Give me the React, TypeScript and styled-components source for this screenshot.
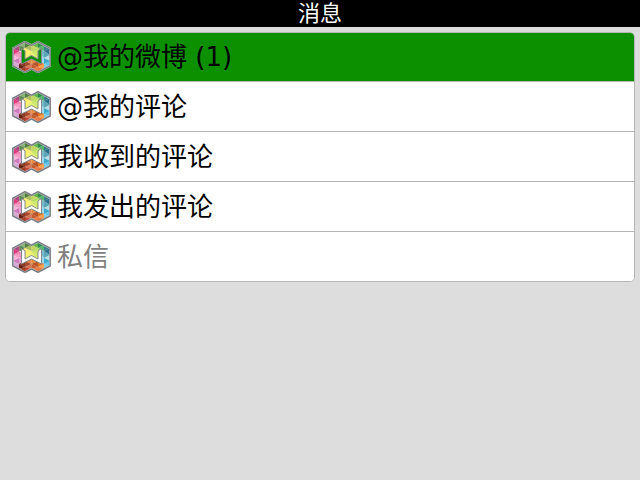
import React from "react";
import styled, { createGlobalStyle } from "styled-components";

const GlobalStyle = createGlobalStyle`
  * { box-sizing: border-box; }
  html, body, #root { height: 100%; }
  body {
    margin: 0;
    background: #dddddd;
    font-family: "DejaVu Sans", "Noto Sans CJK SC", sans-serif;
  }
`;

const Screen = styled.main`
  min-height: 100%;
  background: #dddddd;
`;

const TitleBar = styled.header`
  display: flex;
  align-items: center;
  justify-content: center;
  height: 27px;
  background: #000;
`;

const Title = styled.h1`
  margin: 0;
  color: #fff;
  font-size: 22px;
  line-height: 26px;
  font-weight: 400;
`;

const MessageList = styled.ul`
  margin: 5px;
  padding: 0;
  list-style: none;
  overflow: hidden;
  background: #fff;
  border: 1px solid #b5b5b5;
  border-radius: 5px;
`;

const Item = styled.li`
  & + & { border-top: 1px solid #b5b5b5; }
`;

const RowButton = styled.button<{ $selected?: boolean; $first?: boolean }>`
  display: flex;
  align-items: center;
  gap: 6px;
  width: 100%;
  height: ${(p) => (p.$first ? 48 : 49)}px;
  padding: 0 6px;
  border: 0;
  background: ${(p) => (p.$selected ? "#0c9000" : "#fff")};
  color: #000;
  font: inherit;
  font-size: 26px;
  line-height: 32px;
  text-align: left;
  cursor: pointer;

  &:disabled {
    color: #808080;
    cursor: default;
  }
`;

const Label = styled.span`
  white-space: pre;
`;

const LogoSvg = styled.svg`
  flex: none;
  display: block;
`;

const outline = "M.8 7.3 13 .8l6.5 3.4L26 .8l12.2 6.5v17.6L26 31.3l-6.5-3.4-6.5 3.4L.8 24.9Z";
const letter = "M9.5 7.5V23l10-5 10 5V7.5L26 9.8v8.2l-6.5-3.5L13 18V9.8Z";

const facets: [string, string][] = [
  ["1,7 7,10.5 1,14", "#e23b80"],
  ["1,7 7,4 7,10.5", "#a8497f"],
  ["7,4 10,9 7,10.5", "#c98aa8"],
  ["7,10.5 10,12.5 10,17 1,14", "#f07fae"],
  ["1,14 7,17 1,20", "#ffb6dc"],
  ["1,14 10,12 7,17", "#f59cc8"],
  ["7,17 10,15 10,22 7,23", "#e6a0d2"],
  ["1,20 7,17 7,23", "#cf79bd"],
  ["1,20 7,23 1,25", "#dcaad8"],
  ["7,23 10,21 10,26 7,28 1,25", "#d5a1cf"],
  ["7,4 13,1 13,7", "#8ab277"],
  ["7,4 13,7 8,10", "#5d8a50"],
  ["13,1 19.5,4 13,7", "#547f42"],
  ["13,7 19.5,4 19.5,10", "#a9bd5c"],
  ["13,7 19.5,10 13,13 10,9", "#f3e676"],
  ["19.5,4 26,1 26,7", "#63b64b"],
  ["26,1 32,4 26,7", "#318d4b"],
  ["19.5,4 26,7 19.5,10", "#c3d95e"],
  ["26,7 32,4 32,10", "#54b86f"],
  ["26,7 31,10 26,13 19.5,10", "#a8d860"],
  ["32,4 38,7 32,10", "#397e8b"],
  ["38,7 38,14 32,10", "#2b6f8f"],
  ["29,9 32,10 32,17 29,14", "#75b9cb"],
  ["32,10 38,14 32,17", "#5ba5b9"],
  ["38,14 38,20 32,17", "#b4dfe8"],
  ["29,14 32,17 32,23 29,22", "#9bd8ef"],
  ["32,17 38,20 32,23", "#3da9cc"],
  ["38,20 38,25 32,23", "#5ac6ef"],
  ["29,21 32,23 38,25 32,28 29,24", "#7bcdea"],
  ["7,23 13,20 13,26", "#8a3a20"],
  ["7,23 13,26 7,28", "#651f13"],
  ["7,28 13,26 13,31", "#a14125"],
  ["13,20 19.5,23 13,26", "#a6492c"],
  ["13,20 19.5,17 19.5,23", "#e28547"],
  ["13,26 19.5,23 19.5,28", "#d97455"],
  ["13,26 19.5,28 13,31", "#c4453a"],
  ["19.5,17 26,20 19.5,23", "#f08a3c"],
  ["19.5,23 26,20 26,26", "#b85428"],
  ["19.5,23 26,26 19.5,28", "#c65b2e"],
  ["26,20 32,23 26,26", "#ed741f"],
  ["19.5,28 26,26 26,31", "#e87a4a"],
  ["26,26 32,23 32,28", "#ffa04f"],
  ["26,26 32,28 26,31", "#e8763c"],
];

function Logo({ cutout }: { cutout: string }) {
  return (
    <LogoSvg width="39" height="32" viewBox="0 0 39 32" aria-hidden="true">
      <path d={outline} fill="#dedbd1" />
      {facets.map(([points, fill]) => (
        <polygon key={points} points={points} fill={fill} />
      ))}
      <path d="M13 12l6.5-2 6.5 2v6H13Z" fill="#e6ef7a" />
      <path d="M13 8l6.5 3-6.5 6Z" fill="#ffef70" />
      <path d="M26 8l-6.5 3 6.5 6Z" fill="#cde86a" />
      <path d={outline} fill="none" stroke="#c6c6ca" strokeWidth="2" />
      <path d={outline} fill="none" stroke="#74777f" strokeWidth="1.2" />
      <path d={letter} fill={cutout} stroke="#85878c" strokeWidth="1" />
    </LogoSvg>
  );
}

const messages = [
  { label: "@我的微博 (1)", selected: true },
  { label: "@我的评论" },
  { label: "我收到的评论" },
  { label: "我发出的评论" },
  { label: "私信", disabled: true },
];

export default function App() {
  return (
    <>
      <GlobalStyle />
      <Screen>
        <TitleBar>
          <Title>消息</Title>
        </TitleBar>
        <MessageList>
          {messages.map(({ label, selected, disabled }, index) => (
            <Item key={label}>
              <RowButton $selected={selected} $first={index === 0} disabled={disabled}>
                <Logo cutout={selected ? "#0c9000" : "#fff"} />
                <Label>{label}</Label>
              </RowButton>
            </Item>
          ))}
        </MessageList>
      </Screen>
    </>
  );
}
